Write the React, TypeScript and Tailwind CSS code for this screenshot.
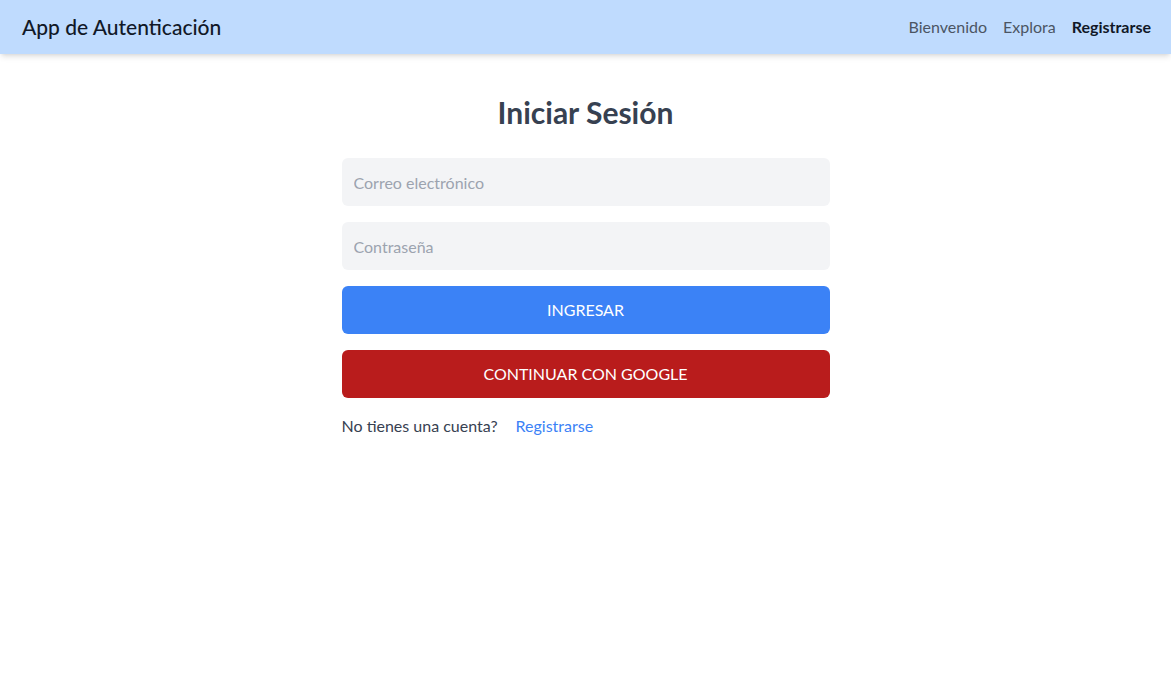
import { useState } from "react";

export default function App() {
  const [email, setEmail] = useState("");
  const [password, setPassword] = useState("");

  return (
    <div className="min-h-screen bg-white font-['Lato',sans-serif] text-[#111827]">
      <nav className="flex h-[54px] items-center justify-between bg-[#bfdbfe] pl-[22px] pr-5 shadow-md">
        <span className="text-[21px] font-medium text-[#111827]">App de Autenticación</span>
        <div className="flex items-center gap-4 text-base">
          <a href="#" className="text-[#4b5563]">Bienvenido</a>
          <a href="#" className="text-[#4b5563]">Explora</a>
          <a href="#" className="font-bold text-[#111827]">Registrarse</a>
        </div>
      </nav>

      <main className="mx-auto mt-10 w-full max-w-lg px-3">
        <h1 className="mb-[28px] text-center text-3xl font-bold text-[#374151]">Iniciar Sesión</h1>
        <form className="flex flex-col gap-4" onSubmit={(e) => e.preventDefault()}>
          <input
            type="email"
            value={email}
            onChange={(e) => setEmail(e.target.value)}
            placeholder="Correo electrónico"
            className="h-12 w-full rounded-md bg-[#f3f4f6] px-3 text-base text-[#1f2937] outline-none placeholder:text-[#9ca3af]"
          />
          <input
            type="password"
            value={password}
            onChange={(e) => setPassword(e.target.value)}
            placeholder="Contraseña"
            className="h-12 w-full rounded-md bg-[#f3f4f6] px-3 text-base text-[#1f2937] outline-none placeholder:text-[#9ca3af]"
          />
          <button type="submit" className="h-12 w-full rounded-md bg-[#3b82f6] text-base uppercase text-white">
            Ingresar
          </button>
          <button type="button" className="h-12 w-full rounded-md bg-[#b91c1c] text-base uppercase text-white">
            Continuar con Google
          </button>
        </form>
        <p className="mt-4 text-base text-[#374151]">
          No tienes una cuenta?
          <a href="#" className="ml-[18px] text-[#3b82f6]">Registrarse</a>
        </p>
      </main>
    </div>
  );
}
